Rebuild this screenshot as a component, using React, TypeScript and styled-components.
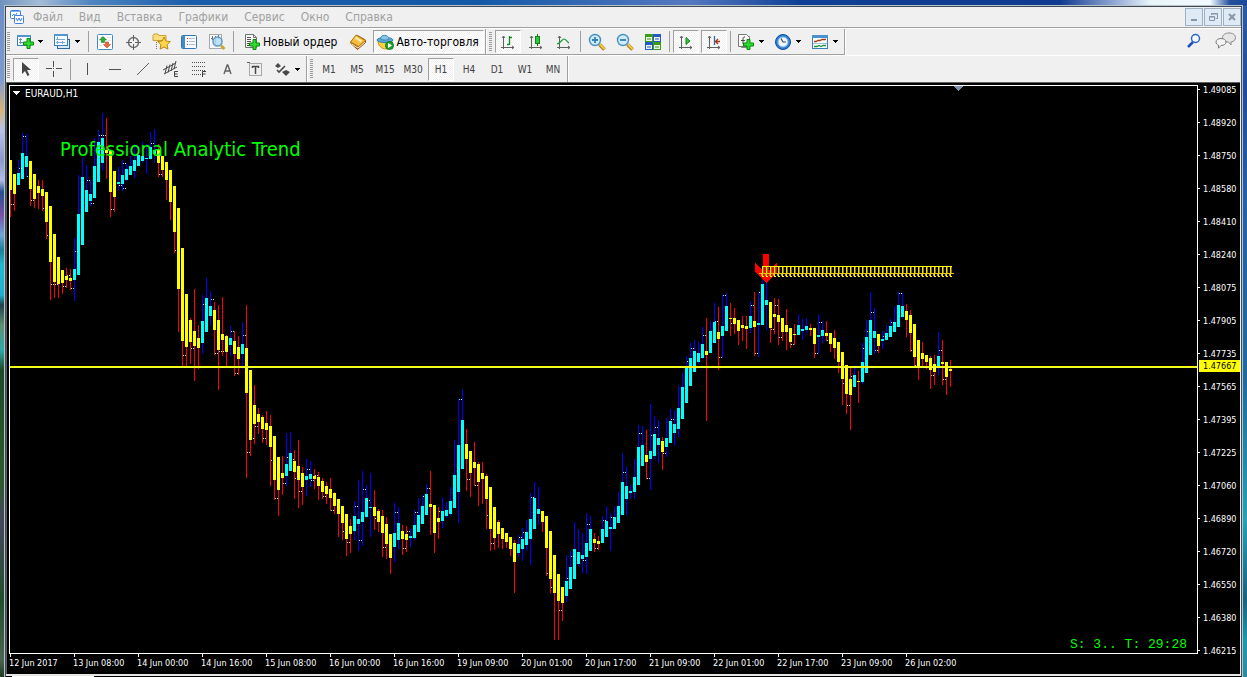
import React from 'react';
import styled, { createGlobalStyle, css } from 'styled-components';

const GlobalStyle = createGlobalStyle`
  * { box-sizing: border-box; }
  body { margin: 0; }
  button { font: inherit; color: inherit; margin: 0; }
`;

const Desktop = styled.div`
  min-height: 100vh;
  display: flex;
  padding: 5px 4px 0 4px;
  font-family: 'DejaVu Sans Condensed', 'DejaVu Sans', sans-serif;
  font-stretch: condensed;
  background:
    linear-gradient(90deg, #6f93bd 0, #a3bcd8 40px, #4f86c0 90px, #1a5dab 190px, #1459a8 480px, #5579c0 690px, #0f3f96 800px, #103a90 1060px, #9fb4dc 1120px, #e8f4fa 1150px, #f4fbff 1210px, #234f9d 1230px, #1d4a98 100%) top / 100% 6px no-repeat,
    linear-gradient(180deg, #2a5da8 0, #1d4c9c 90px, #2361a8 200px, #1c6aa0 380px, #27a0b8 520px, #15627f 600px, #1f97b0 640px, #2e8aa0 100%) right / 4px 100% no-repeat,
    linear-gradient(180deg, #6a8cc8 0, #7f9bd0 80px, #d9b27a 110px, #b8c4ea 130px, #8d99cc 160px, #b4bde4 180px, #24508c 192px, #7a4fa8 215px, #6fa6d8 235px, #1e7f96 250px, #22b8d0 265px, #22b0cc 295px, #20404c 305px, #5f9070 325px, #2fa8a8 350px, #1c4a28 370px, #2d5a2c 480px, #46465c 520px, #20502c 600px, #4a6450 660px, #203a24 100%) left / 4px 100% no-repeat,
    #16304c;
`;

const Frame = styled.div`
  flex: 1;
  min-width: 0;
  display: flex;
  flex-direction: column;
  border: 1px solid #b9c2c8;
  border-bottom: 0;
`;

const Inner = styled.div`
  flex: 1;
  display: flex;
  flex-direction: column;
  border: 1px solid #3c4a58;
  border-width: 1px 1px 0 1px;
  background: #f0f0f0;
`;

const MenuBar = styled.nav`
  display: flex;
  align-items: center;
  height: 21px;
  padding: 0 0 0 4px;
  border-bottom: 1px solid #a0a0a0;
  font-size: 12px;
  color: #a0a0a0;
`;

const MenuItem = styled.button`
  height: 20px;
  padding: 0 8px;
  border: 0;
  background: none;
  line-height: 20px;
`;

const AppIcon = styled.div`
  width: 15px;
  height: 16px;
`;

const WindowButtons = styled.div`
  display: flex;
  gap: 1px;
  margin-left: auto;
`;

const WindowButton = styled.button`
  width: 18px;
  height: 18px;
  padding: 0;
  display: grid;
  place-items: center;
  border: 1px solid #9fb0c2;
  background: #dfeaf7;
`;

const ToolRow = styled.div`
  display: flex;
  height: 27px;
  border-top: 1px solid #fff;
`;

const Strip = styled.div`
  display: flex;
  align-items: center;
  border-right: 1px solid #a0a0a0;
  border-bottom: 1px solid #a0a0a0;
  box-shadow: 1px 1px 0 #fff;

  & + & { padding-left: 2px; }
`;

const FlatStrip = styled(Strip)`
  border-bottom: 0;
  box-shadow: 1px 0 0 #fff;
`;

const Grip = styled.span`
  width: 3px;
  height: 20px;
  margin: 0 2px 0 1px;
  background: repeating-linear-gradient(180deg, #9a9a9a 0 1px, #f0f0f0 1px 2px);
`;

const Separator = styled.span`
  width: 1px;
  height: 21px;
  margin: 0 2px;
  background: #a0a0a0;
`;

const pressedLook = css`
  border-color: #a0a0a0 #fff #fff #a0a0a0;
  background: repeating-conic-gradient(#ffffff 0 25%, #f0f0f0 0 50%) 0 0 / 2px 2px;
`;

const ToolButton = styled.button<{ $pressed?: boolean; $wide?: boolean }>`
  display: flex;
  align-items: center;
  justify-content: ${p => (p.$wide ? 'flex-start' : 'center')};
  gap: 4px;
  width: ${p => (p.$wide ? 35 : 26)}px;
  height: 23px;
  margin: 0 1px;
  padding: ${p => (p.$wide ? '0 0 0 2px' : '0')};
  border: 1px solid transparent;
  background: none;
  font-size: 10px;
  color: #404040;
  white-space: nowrap;
  ${p => p.$pressed && pressedLook}
`;

const TextButton = styled(ToolButton)`
  width: auto;
  gap: 2px;
  padding: 0 5px;
  font-size: 12px;
  color: #000;
`;

const AutoButton = styled(TextButton)`
  padding: 0 4px 0 2px;
`;

const Picture = styled.svg`
  display: block;
  flex: none;
`;

const RightTools = styled.div`
  display: flex;
  gap: 4px;
  margin-left: auto;
  padding-right: 1px;
`;

const ChartWindow = styled.main`
  flex: 1;
  display: flex;
  margin: 0 1px 0 0;
  padding: 2px 0 0 2px;
  border-top: 1px solid #606060;
  border-left: 1px solid #606060;
  background: #000;
  color: #fff;
  font-size: 9px;
`;

const PlotColumn = styled.div`
  flex: 1;
  min-width: 0;
  display: flex;
  flex-direction: column;
`;

const Plot = styled.div`
  position: relative;
  flex: 1;
  border: 1px solid #fff;
`;

const PlotDrawing = styled.svg`
  position: absolute;
  inset: 0;
  width: 100%;
  height: 100%;
`;

const SymbolTitle = styled.div`
  position: absolute;
  top: 1px;
  left: 3px;
  display: flex;
  align-items: center;
  gap: 4px;
  height: 12px;
  font-size: 10px;
`;

const IndicatorName = styled.div`
  position: absolute;
  top: 51px;
  left: 50px;
  font-size: 20px;
  line-height: 24px;
  color: #00ff00;
  white-space: nowrap;
`;

const SpreadTimer = styled.div`
  position: absolute;
  right: 10px;
  bottom: 0;
  font-family: 'Liberation Mono', monospace;
  font-size: 13px;
  line-height: 16px;
  color: #00ff00;
  white-space: pre;
`;

const TimeAxis = styled.div`
  display: flex;
  height: 20px;
  overflow: hidden;
`;

const TimeLabel = styled.span`
  flex: none;
  width: 64px;
  line-height: 18px;
  white-space: nowrap;
  background: linear-gradient(#fff, #fff) 1px 0 / 1px 3px no-repeat;
`;

const PriceAxis = styled.div`
  position: relative;
  width: 42px;
`;

const PriceLabel = styled.div`
  height: 33px;
  padding-left: 5px;
  line-height: 10px;
  background: linear-gradient(#fff, #fff) 0 4px / 2px 1px no-repeat;

  &:nth-child(18) { height: 12px; }
`;

const CurrentPrice = styled.div`
  position: absolute;
  top: 275px;
  left: 1px;
  right: 0;
  padding-left: 4px;
  line-height: 12px;
  background: #ffff00;
  color: #000;
`;

const BottomEdge = styled.div`
  height: 3px;
  border-top: 2px solid #e6e6e2;
  background: linear-gradient(90deg, #000 6px, #fff 6px 88px, #000 88px);
`;

const Sym = ({ size = 18, children, label }: { size?: number; children: React.ReactNode; label?: string }) => (
  <Picture width={size} height={size} viewBox={`0 0 ${size} ${size}`} fill="none" aria-hidden={!label}>
    {children}
  </Picture>
);

const Arrow = () => (
  <Picture width="5" height="3" viewBox="0 0 5 3" shapeRendering="crispEdges">
    <path d="M0 0h5v1h-1v1h-1v1h-1v-1h-1v-1h-1z" fill="#000" />
  </Picture>
);

const Plus = ({ x, y }: { x: number; y: number }) => (
  <path transform={`translate(${x} ${y})`} d="M4 .5h3v3.500h3.500v3h-3.500v3.500h-3v-3.500h-3.500v-3h3.500z" fill="#2fdc2f" stroke="#068a0c" />
);

const NewChart = () => (
  <Sym>
    <rect x="1.500" y="2.500" width="13" height="10" fill="#f4faff" stroke="#3b7fb8" />
    <path d="M1 3h14" stroke="#4f97cc" strokeWidth="2" />
    <path d="M4.500 5v6M3 9.500h5M3 6.500h3" stroke="#7393ab" />
    <Plus x={7} y={5} />
  </Sym>
);
const Profiles = () => (
  <Sym>
    <rect x="4.500" y="6.500" width="12" height="9" fill="#d8e9f6" stroke="#2e6aa5" />
    <rect x="1.500" y="1.500" width="13" height="11" fill="#f4faff" stroke="#3b7fb8" />
    <path d="M1 2h14" stroke="#4f97cc" strokeWidth="2" />
    <path d="M4.500 4v3M3 6.500h9M4.500 8v3M3 9.500h9M9.500 8v3" stroke="#7ba6c6" />
  </Sym>
);
const MarketWatch = () => (
  <Sym>
    <rect x="1.500" y="1.500" width="15" height="15" rx="1" fill="#fff" stroke="#3f8ac4" />
    <path d="M4 4.500h2M11 4.500h4M12 7.500h3M3 12.500h3" stroke="#d9e2ea" />
    <path d="M7 3.500l3.500 3.500h-2v2.500h-3v-2.500h-2z" fill="#2da836" stroke="#158020" strokeWidth=".6" />
    <path d="M11 15l-3.500-3.500h2v-2.500h3v2.500h2z" fill="#ee6a3a" stroke="#c8401c" strokeWidth=".6" />
  </Sym>
);
const DataWindow = () => (
  <Sym>
    <circle cx="9.500" cy="9.500" r="5" stroke="#707070" strokeWidth="1.500" />
    <path d="M9.500 2v6M9.500 11v6M2 9.500h6M11 9.500h6" stroke="#606060" />
  </Sym>
);
const Navigator = () => (
  <Sym size={20}>
    <path d="M2 3.500l1-1.500h4l1 1.500h7v5h-13z" fill="#f9df7a" stroke="#caa036" />
    <path d="M5.500 10v8" stroke="#707070" strokeDasharray="1 1" />
    <path d="M13 5l1.900 4 4.300.6-3.100 3.100.8 4.400-3.900-2.100-3.900 2.100.8-4.400-3.100-3.100 4.300-.6z" fill="#ffd648" stroke="#b98414" />
  </Sym>
);
const Terminal = () => (
  <Sym>
    <rect x="1.500" y="2.500" width="15" height="13" rx="1" fill="#f7fbff" stroke="#2f78b6" />
    <path d="M2 3h3v12h-3z" fill="#3d8ccc" />
    <path d="M7.500 5v9" stroke="#3058a0" strokeDasharray="1 2" />
    <path d="M9 5.500h6M9 8.500h6M9 11.500h6" stroke="#b3c0cc" />
    <path d="M7 5.500h1M7 8.500h1M7 11.500h1" stroke="#de3a22" />
  </Sym>
);
const Tester = () => (
  <Sym>
    <rect x="1.500" y="1.500" width="12" height="14" fill="#f8f8f8" stroke="#a3a9ae" />
    <path d="M4.500 3v4M7.500 3v9M10.500 2v4M3 5.500h2M6 8.500h2" stroke="#707070" />
    <circle cx="9.500" cy="8.500" r="4.500" fill="#b5dcf4" fillOpacity=".85" stroke="#5a9bd0" strokeWidth="1.500" />
    <path d="M13 12.500l3.500 3.500" stroke="#d3a12a" strokeWidth="2.500" />
  </Sym>
);
const NewOrder = () => (
  <Sym>
    <path d="M2.500 1.500h8l3 3v10h-11z" fill="#fafafa" stroke="#707070" />
    <path d="M10.500 1.500v3h3" stroke="#707070" />
    <path d="M4 4.500h4M4 6.500h4M4 8.500h4M4 10.500h4M4 12.500h3" stroke="#555" />
    <Plus x={6} y={6} />
  </Sym>
);
const Book = () => (
  <Sym>
    <path d="M1.500 10l7 6.500 8-7v-2.500l-8-4.500z" fill="#a9640f" stroke="#8e520c" />
    <path d="M7 2l9.500 5.500-7 6-8-4.500z" fill="#f4bd3c" stroke="#b0771a" />
    <path d="M6.500 4.500l6 4" stroke="#ffe9a0" strokeWidth="2.500" />
    <path d="M2.500 11l6.500 4 7-6" stroke="#fff0c0" />
  </Sym>
);
const Robot = () => (
  <Sym>
    <path d="M2 8c0 4 3 8 8 8s6-3 6-8z" fill="#ffcf3e" stroke="#c99316" />
    <ellipse cx="9" cy="7" rx="8" ry="2.500" fill="#5ba9d6" stroke="#347eb0" />
    <path d="M4.500 6c0-5 8-5 8.500 0-2 1.500-6 1.500-8.500 0z" fill="#86c5e8" stroke="#3c88b6" />
    <circle cx="13.500" cy="12.500" r="4" fill="#1ea52c" stroke="#0c7d18" />
    <path d="M12 10l4 2.500-4 2.500z" fill="#fff" />
  </Sym>
);
const Axes = ({ children }: { children: React.ReactNode }) => (
  <Sym>
    <path d="M4.500 3v13M2 14.500h13M3 5l1.500-2 1.500 2M13 13l2 1.500-2 1.500" stroke="#606060" />
    {children}
  </Sym>
);
const BarsIcon = () => <Axes><path d="M10.500 3v9M8 11.500h2M11 4.500h2" stroke="#128a1c" strokeWidth="1.300" /></Axes>;
const CandlesIcon = () => <Axes><path d="M10.500 1v12" stroke="#0c7a16" /><rect x="8.500" y="3.500" width="4" height="7" fill="#2fc83a" stroke="#0c8a18" /></Axes>;
const LineIcon = () => <Axes><path d="M2 11c4-1 5-5 7-5s3 3 5 4" stroke="#23963a" strokeWidth="1.200" /></Axes>;
const Magnifier = ({ plus }: { plus?: boolean }) => (
  <Sym>
    <path d="M11.500 11.500l5 5" stroke="#a77a14" strokeWidth="3.500" />
    <path d="M12 11.500l4.500 4.500" stroke="#f0cb48" strokeWidth="2" />
    <circle cx="7" cy="7" r="5.500" fill="#cfeaf9" stroke="#4690c0" strokeWidth="1.400" />
    <path d={plus ? 'M4 7h6M7 4v6' : 'M4 7h6'} stroke="#3580b4" strokeWidth="1.800" />
  </Sym>
);
const Tiles = () => (
  <Sym>
    {[[1, 1, '#3d9c12'], [9, 1, '#2558c8'], [1, 9, '#2558c8'], [9, 9, '#3d9c12']].map(([x, y, c]) => (
      <g key={`${x}-${y}`} transform={`translate(${x} ${y})`}>
        <path d="M0 0h8v8h-8z" fill={c as string} />
        <path d="M1 3h6v4h-6z" fill="#eaf6ea" />
        <path d="M2 5h4" stroke={c as string} />
      </g>
    ))}
  </Sym>
);
const AutoScroll = () => <Axes><path d="M9 4.500l4 3.500-4 3.500z" fill="#35c83e" stroke="#0d8218" /></Axes>;
const ChartShift = () => <Axes><path d="M9.500 3v9" stroke="#2c6ca4" strokeWidth="1.300" /><path d="M15 8.500h-4M13 6l-2.500 2.500 2.500 2.500" stroke="#b03a10" strokeWidth="1.400" /></Axes>;
const Indicators = () => (
  <Sym>
    <path d="M4.500 3.500h8v11h-8z" fill="#e6e6e6" stroke="#888" />
    <path d="M1.500 1.500h8l3 3v9h-11z" fill="#fafafa" stroke="#777" />
    <path d="M8 4c-2-.500-2 1-2 3v4M4 7.500h4" stroke="#404040" />
    <Plus x={6} y={6} />
  </Sym>
);
const Clock = () => (
  <Sym>
    <circle cx="9" cy="9" r="7.500" fill="#2c7fd4" stroke="#124f9c" />
    <circle cx="9" cy="9" r="5" fill="#f2f7fb" stroke="#8ebbe6" />
    <path d="M7 5.500l2 3.500h3" stroke="#404a58" strokeWidth="1.200" />
  </Sym>
);
const Template = () => (
  <Sym>
    <rect x="1.500" y="2.500" width="15" height="13" fill="#fafdff" stroke="#3b7fb8" />
    <path d="M1 3.500h16" stroke="#4a92d0" strokeWidth="3" />
    <path d="M3 8.500h2l2-1h2l2-1h3l1-.500" stroke="#a43a12" strokeWidth="1.300" />
    <path d="M2 10.500h14" stroke="#9cc2de" />
    <path d="M3 13.500h3l2-1 2 1 2-1h3" stroke="#22923a" strokeWidth="1.300" />
  </Sym>
);

const Cursor = () => <Sym><path d="M5 2v12l3-3 2.500 5 2-1-2.500-5h4z" fill="#454545" /></Sym>;
const Cross = () => <Sym><path d="M8.500 1v6M8.500 11v6M1 8.500h6M11 8.500h6M8 8.500h1" stroke="#505050" /></Sym>;
const VLine = () => <Sym><path d="M9.500 3v12" stroke="#505050" /></Sym>;
const HLine = () => <Sym><path d="M3 9.500h12" stroke="#505050" /></Sym>;
const TLine = () => <Sym><path d="M3 15l12-12" stroke="#606060" /></Sym>;
const Channel = () => (
  <Sym>
    <path d="M1 10l13-7M2 14l13-7M5 5.500l-2 8M8 4.500l-2 8M11 3l-2 8M14 1l-2 8" stroke="#484848" />
    <path d="M16 11.500h-3.500v5h3.500M12.500 14h3" stroke="#404040" />
  </Sym>
);
const Fibo = () => (
  <Sym>
    <path d="M2 2.500h14M2 6.500h14M2 10.500h14M2 14.500h9" stroke="#505050" strokeDasharray="1 1" />
    <path d="M12.500 17v-5.500h3.500M12.500 14h3" stroke="#404040" />
  </Sym>
);
const LetterA = () => <Sym><path d="M6 14l3.200-9h.6l3.200 9M7 11h5" stroke="#606060" strokeWidth="1.400" /></Sym>;
const LabelT = () => (
  <Sym>
    <rect x="3.500" y="3.500" width="12" height="12" stroke="#606060" strokeDasharray="1 1" />
    <path d="M1 2.500h3" stroke="#606060" />
    <path d="M6 6.500h7M9.500 6v8M6.500 6v2M12.500 6v2" stroke="#484848" strokeWidth="1.500" />
  </Sym>
);
const Shapes = () => (
  <Sym>
    <path d="M2 6l3-3 3 3-3 2zM9 12l4 4 4-4-4-2z" fill="#484848" />
    <path d="M4 10l2 2 6-6" stroke="#484848" strokeWidth="1.600" />
  </Sym>
);

/* Candle rows: direction (1 up, 0 down), high, body top, body bottom, low in pane pixels. */
const CANDLES: number[][] = [
  [0,160,160,190,217],[0,174,174,194,211],[1,160,173,185,185],[1,133,153,179,179],[1,134,156,167,177],[0,161,161,189,206],[0,174,174,199,208],[0,180,186,193,209],[0,180,189,196,211],[0,192,192,222,239],
  [0,206,206,262,300],[0,234,234,282,298],[0,257,257,284,298],[0,270,270,283,294],[0,268,276,280,288],[0,269,278,281,290],[1,238,269,280,301],[1,175,214,275,275],[1,158,177,245,245],[1,165,190,212,212],
  [1,180,194,201,206],[1,138,166,198,199],[1,130,142,182,182],[1,113,138,163,170],[0,118,150,153,179],[0,151,151,192,217],[0,171,171,197,212],[1,167,182,184,190],[1,160,175,184,191],[1,163,169,180,181],
  [1,156,166,175,175],[1,144,160,171,178],[1,146,155,166,166],[1,142,156,161,163],[1,144,158,159,174],[1,132,147,159,159],[1,129,150,154,163],[0,144,150,163,177],[0,156,156,170,177],[0,162,162,180,200],
  [0,170,170,202,220],[0,186,186,232,253],[0,208,208,289,332],[0,248,248,341,366],[0,294,294,347,366],[0,318,320,342,364],[0,289,331,346,381],[0,325,338,348,369],[1,295,321,343,354],[1,278,298,332,332],
  [1,291,306,316,326],[0,302,310,330,355],[0,305,320,350,390],[0,297,334,340,356],[0,335,336,352,366],[1,326,338,345,356],[0,331,341,354,376],[0,336,347,359,375],[1,322,344,354,369],[0,305,348,393,478],
  [0,370,370,440,456],[0,385,405,424,444],[0,408,414,422,434],[0,415,417,429,443],[0,411,423,430,445],[0,415,426,447,486],[0,436,436,480,500],[0,457,457,490,516],[0,456,473,478,495],[1,433,464,476,486],
  [1,432,453,471,471],[0,450,461,472,499],[0,440,466,480,508],[0,467,473,487,505],[1,459,476,480,496],[1,461,474,479,487],[0,469,476,479,489],[0,472,477,486,500],[0,478,481,492,499],[0,482,486,494,504],
  [0,478,489,498,511],[0,492,493,506,514],[0,499,499,514,537],[0,506,506,523,540],[0,514,514,539,556],[0,519,526,534,553],[1,501,516,531,540],[1,480,519,524,551],[1,471,512,522,546],[1,485,498,517,518],
  [1,473,507,508,537],[0,490,507,516,530],[0,509,511,522,532],[0,510,516,533,557],[0,517,524,544,559],[0,534,534,558,574],[1,503,533,547,562],[1,507,523,540,549],[0,525,531,539,555],[0,526,534,540,552],
  [1,529,536,538,547],[1,510,525,538,540],[1,498,515,532,532],[1,495,506,524,524],[1,484,494,515,515],[0,471,504,507,535],[0,505,505,533,553],[0,507,518,522,539],[1,497,511,521,528],[1,502,510,516,518],
  [1,487,501,514,516],[1,440,475,508,508],[1,399,445,492,523],[1,389,420,469,469],[0,429,444,459,491],[0,451,451,473,497],[0,442,462,468,486],[0,462,464,482,506],[0,462,473,479,504],[0,474,476,499,529],
  [0,487,487,529,551],[0,507,507,538,550],[0,520,522,534,548],[0,528,528,539,549],[0,533,533,542,548],[0,537,537,549,556],[0,540,543,562,593],[1,535,544,553,557],[1,528,539,549,561],[1,520,532,545,551],
  [1,493,519,539,565],[1,482,498,529,529],[1,487,509,514,525],[0,511,511,522,532],[0,516,516,548,576],[0,531,531,579,593],[0,555,555,593,640],[0,574,574,601,640],[0,587,587,603,621],[1,555,581,596,602],
  [1,551,567,589,589],[1,522,549,579,579],[1,529,552,564,566],[1,533,555,559,573],[1,513,543,557,574],[1,516,529,551,551],[0,533,539,543,552],[0,536,541,544,550],[1,516,529,543,543],[1,506,521,537,537],
  [1,513,527,529,551],[1,506,517,529,529],[1,492,506,523,523],[1,453,482,515,515],[1,466,486,499,515],[1,485,491,493,499],[1,459,477,492,499],[1,425,447,485,485],[1,426,445,466,466],[0,430,455,462,479],
  [1,404,451,459,490],[1,416,434,456,459],[1,420,438,445,463],[0,437,441,452,470],[1,418,438,447,457],[1,409,421,443,443],[1,410,424,433,446],[1,385,408,429,437],[1,373,387,419,419],[1,356,367,403,403],
  [1,343,358,386,386],[1,340,351,372,372],[1,342,353,362,364],[1,327,344,358,359],[0,318,351,355,421],[1,321,331,353,353],[1,303,322,343,343],[0,307,332,339,370],[1,295,326,336,358],[1,293,306,331,331],
  [0,303,318,319,336],[0,308,318,324,334],[0,320,320,331,345],[0,316,325,328,341],[0,316,326,329,349],[1,302,316,328,333],[0,292,321,327,356],[1,292,323,325,357],[1,280,284,325,325],[1,282,300,305,330],
  [0,302,302,328,343],[0,298,314,317,334],[0,299,315,322,345],[0,318,318,332,341],[0,309,325,332,350],[0,328,328,342,348],[0,324,334,335,345],[1,314,325,335,335],[1,319,329,331,340],[1,318,326,330,333],
  [0,324,328,330,336],[0,328,328,344,358],[1,314,335,337,354],[1,321,330,336,343],[0,321,333,336,341],[0,333,333,344,352],[0,330,338,348,359],[0,342,342,362,373],[0,352,352,379,405],[0,365,365,394,414],
  [0,368,379,395,430],[1,365,375,387,387],[0,371,381,382,403],[1,343,362,382,384],[1,320,337,373,373],[1,292,320,355,355],[1,308,331,338,354],[0,334,334,346,353],[1,331,339,341,349],[1,325,333,340,340],
  [1,319,326,337,337],[1,306,322,332,332],[1,292,305,327,327],[1,293,306,317,319],[0,304,311,320,337],[0,310,315,333,352],[0,324,324,357,367],[0,340,340,366,380],[0,342,353,359,366],[0,355,355,362,369],
  [0,356,358,370,389],[0,355,364,372,385],[1,332,356,366,375],[0,340,362,364,385],[0,362,362,377,395],[0,360,369,371,387],
];

/* Close/open ticks between neighbouring candles: candle index, y. */
const TICKS: number[][] = [
  [0,204],[2,168],[3,136],[4,176],[5,200],[7,189],[8,208],[9,235],[10,284],[11,284],[13,286],[14,275],[15,288],[16,251],[19,180],[20,203],[22,135],[23,135],[25,209],[27,185],[28,188],[28,163],[35,143],[37,174],[41,250],[43,355],[45,348],[48,304],[50,299],[51,353],[52,351],[53,351],[55,331],[56,373],[58,335],
  [59,452],[60,438],[61,426],[63,438],[65,460],[66,498],[68,483],[69,457],[70,459],[71,478],[72,491],[74,469],[75,480],[76,475],[78,496],[80,510],[83,531],[84,542],[86,506],[87,540],[88,489],[89,500],[91,518],[93,547],[96,512],[98,548],[99,531],[101,512],[103,496],
  [104,488],[107,511],[112,399],[114,479],[116,485],[119,515],[120,543],[127,537],[128,532],[130,497],[134,573],[135,587],[137,610],[139,578],[140,556],[143,560],[144,524],[146,548],[148,520],[150,517],[153,472],[157,433],[159,478],
  [160,435],[161,427],[163,453],[165,419],[169,361],[170,348],[173,335],[176,321],[177,357],[178,295],[180,323],[185,305],[186,353],[187,292],[190,329],[191,305],[192,337],[195,344],[201,353],[202,322],[204,340],[208,383],[209,405],[210,376],[213,348],[214,331],[215,312],[216,350],[218,336],[220,322],[222,293],[225,350],[226,365],[230,375],[232,350],[233,379],
];

const PRICES = ['1.49085','1.48920','1.48750','1.48580','1.48410','1.48240','1.48075','1.47905','1.47735','1.47565','1.47395','1.47225','1.47060','1.46890','1.46720','1.46550','1.46380','1.46215'];
const TIMES = ['12 Jun 2017','13 Jun 08:00','14 Jun 00:00','14 Jun 16:00','15 Jun 08:00','16 Jun 00:00','16 Jun 16:00','19 Jun 09:00','20 Jun 01:00','20 Jun 17:00','21 Jun 09:00','22 Jun 01:00','22 Jun 17:00','23 Jun 09:00','26 Jun 02:00'];
const MENU = ['Файл', 'Вид', 'Вставка', 'Графики', 'Сервис', 'Окно', 'Справка'];
const PERIODS = ['M1', 'M5', 'M15', 'M30', 'H1', 'H4', 'D1', 'W1', 'MN'];

const Candles = () => (
  <PlotDrawing shapeRendering="crispEdges" aria-label="EURAUD H1">
    <g transform="translate(-10 -86)">
      {CANDLES.map(([up, high, top, bottom, low], i) => {
        const x = 10 + i * 4;
        return (
          <g key={i}>
            <rect x={x} y={high} width="1" height={low - high} fill={up ? '#0000ff' : '#ff0000'} />
            <rect x={x - 1} y={top} width="3" height={bottom - top} fill={up ? '#00ffff' : '#ffff00'} />
          </g>
        );
      })}
      {TICKS.map(([i, y]) => (
        <g key={`${i}-${y}`}>
          <rect x={11 + i * 4} y={y} width="1" height="1" fill={i % 2 ? '#ffff66' : '#40ffff'} />
          <rect x={13 + i * 4} y={y} width="1" height="1" fill={i % 2 ? '#40ffff' : '#ffff66'} />
        </g>
      ))}
      <path d="M763 254h6v16l8-7v9l-10 11h-1l-11-11v-9l8 7z" fill="#ff0000" />
      {Array.from({ length: 48 }, (_, i) => (
        <g key={i}>
          <rect x={762 + i * 4} y="267" width="1" height="9" fill="#d8f000" />
          <rect x={763 + i * 4} y="267" width="1" height="7" fill="#a06a10" />
          <rect x={761 + i * 4} y="274" width="1" height="2" fill="#e0a010" />
          <rect x={762 + i * 4} y="276" width="2" height="1" fill="#ffff00" />
        </g>
      ))}
      <path d="M762 266.500h190" stroke="#ffff00" />
      <path d="M759 273.500h195" stroke="#e8c800" />
    </g>
    <g transform="translate(0 280)">
      <rect width="100%" height="1" fill="#ffff00" />
      <rect y="1" width="100%" height="1" fill="#e8ff30" />
    </g>
    <path d="M944 0h9v1h-1v1h-1v1h-1v1h-1v1h-1v-1h-1v-1h-1v-1h-1v-1h-1z" fill="#8091a8" />
  </PlotDrawing>
);

export default function App() {
  return (
    <Desktop>
      <GlobalStyle />
      <Frame>
        <Inner>
          <MenuBar>
            <AppIcon>
              <Sym size={16}>
                <rect x=".5" y="1.500" width="10" height="8" rx="1" fill="#fff" stroke="#3f7fe0" />
                <path d="M1 2.500h9" stroke="#7eaef2" />
                <path d="M2 7l2-2 1 2 2-3" stroke="#3f7fe0" />
                <rect x="4.500" y="6.500" width="9" height="8" rx="1" fill="#fff" stroke="#3f7fe0" />
                <path d="M6 9l1.500 3 1.500-3 1.500 3 1.500-3" stroke="#3f7fe0" />
              </Sym>
            </AppIcon>
            {MENU.map(m => <MenuItem key={m}>{m}</MenuItem>)}
            <WindowButtons>
              <WindowButton aria-label="Свернуть"><Sym size={12}><path d="M3 9h6" stroke="#8796a6" strokeWidth="2" /></Sym></WindowButton>
              <WindowButton aria-label="Восстановить"><Sym size={12}><path d="M4.500 4v-1.500h6v5h-2M4 3h7" stroke="#8796a6" /><path d="M2.500 5.500h5v4h-5zM2 6h6" stroke="#8796a6" /></Sym></WindowButton>
              <WindowButton aria-label="Закрыть"><Sym size={12}><path d="M3 3l6 6M9 3l-6 6" stroke="#8796a6" strokeWidth="2" /></Sym></WindowButton>
            </WindowButtons>
          </MenuBar>

          <ToolRow>
            <Strip>
              <Grip />
              <ToolButton $wide aria-label="Новый график"><NewChart /><Arrow /></ToolButton>
              <ToolButton $wide aria-label="Профили"><Profiles /><Arrow /></ToolButton>
              <Separator />
              <ToolButton aria-label="Обзор рынка"><MarketWatch /></ToolButton>
              <ToolButton aria-label="Окно данных"><DataWindow /></ToolButton>
              <ToolButton aria-label="Навигатор"><Navigator /></ToolButton>
              <ToolButton aria-label="Терминал"><Terminal /></ToolButton>
              <ToolButton aria-label="Тестер"><Tester /></ToolButton>
              <Separator />
              <TextButton><NewOrder />Новый ордер</TextButton>
              <ToolButton aria-label="MetaEditor"><Book /></ToolButton>
              <AutoButton $pressed><Robot />Авто-торговля</AutoButton>
            </Strip>
            <Strip>
              <Grip />
              <ToolButton $pressed aria-label="Бары"><BarsIcon /></ToolButton>
              <ToolButton aria-label="Свечи"><CandlesIcon /></ToolButton>
              <ToolButton aria-label="Линия"><LineIcon /></ToolButton>
              <Separator />
              <ToolButton aria-label="Увеличить"><Magnifier plus /></ToolButton>
              <ToolButton aria-label="Уменьшить"><Magnifier /></ToolButton>
              <ToolButton aria-label="Окна мозаикой"><Tiles /></ToolButton>
              <Separator />
              <ToolButton $pressed aria-label="Автопрокрутка"><AutoScroll /></ToolButton>
              <ToolButton $pressed aria-label="Сдвиг графика"><ChartShift /></ToolButton>
              <Separator />
              <ToolButton $wide aria-label="Индикаторы"><Indicators /><Arrow /></ToolButton>
              <ToolButton $wide aria-label="Периоды"><Clock /><Arrow /></ToolButton>
              <ToolButton $wide aria-label="Шаблоны"><Template /><Arrow /></ToolButton>
            </Strip>
            <RightTools>
              <ToolButton aria-label="Поиск">
                <Sym><path d="M3 15l5-5" stroke="#1f4fc0" strokeWidth="2.500" /><circle cx="10.500" cy="6.500" r="4" fill="#f4f8ff" stroke="#2c62d4" strokeWidth="1.500" /></Sym>
              </ToolButton>
              <ToolButton aria-label="Чат">
                <Sym size={22}>
                  <path d="M14 3c-4 0-6.500 2-6.500 4.500s2 4.500 6 4.500l2.500 3v-3c3-.5 4.500-2 4.500-4.500s-2.500-4.500-6.500-4.500z" fill="#e6e6e6" stroke="#8a8a8a" />
                  <path d="M6 8.500c-3 0-5 1.500-5 3.500 0 1.500 1 2.800 2.500 3.200v3l2.500-2.700c3 0 5-1.500 5-3.500s-2-3.500-5-3.500z" fill="#f4f4f4" stroke="#7a7a7a" />
                </Sym>
              </ToolButton>
            </RightTools>
          </ToolRow>

          <ToolRow>
            <FlatStrip>
              <Grip />
              <ToolButton $pressed aria-label="Курсор"><Cursor /></ToolButton>
              <ToolButton aria-label="Перекрестие"><Cross /></ToolButton>
              <Separator />
              <ToolButton aria-label="Вертикальная линия"><VLine /></ToolButton>
              <ToolButton aria-label="Горизонтальная линия"><HLine /></ToolButton>
              <ToolButton aria-label="Трендовая линия"><TLine /></ToolButton>
              <ToolButton aria-label="Канал"><Channel /></ToolButton>
              <ToolButton aria-label="Фибоначчи"><Fibo /></ToolButton>
              <ToolButton aria-label="Текст"><LetterA /></ToolButton>
              <ToolButton aria-label="Метка"><LabelT /></ToolButton>
              <ToolButton $wide aria-label="Стрелки"><Shapes /><Arrow /></ToolButton>
            </FlatStrip>
            <FlatStrip>
              <Grip />
              {PERIODS.map(p => <ToolButton key={p} $pressed={p === 'H1'}>{p}</ToolButton>)}
            </FlatStrip>
          </ToolRow>

          <ChartWindow>
            <PlotColumn>
              <Plot>
                <Candles />
                <SymbolTitle>
                  <Picture width="8" height="4" viewBox="0 0 8 4" shapeRendering="crispEdges"><path d="M0 0h7v1h-1v1h-1v1h-1v1h-1v-1h-1v-1h-1v-1h-1z" fill="#fff" /></Picture>
                  EURAUD,H1
                </SymbolTitle>
                <IndicatorName>Professional Analytic Trend</IndicatorName>
                <SpreadTimer>S: 3.. T: 29:28</SpreadTimer>
              </Plot>
              <TimeAxis>{TIMES.map(t => <TimeLabel key={t}>{t}</TimeLabel>)}</TimeAxis>
            </PlotColumn>
            <PriceAxis>
              {PRICES.map(p => <PriceLabel key={p}>{p}</PriceLabel>)}
              <CurrentPrice>1.47667</CurrentPrice>
            </PriceAxis>
          </ChartWindow>
          <BottomEdge />
        </Inner>
      </Frame>
    </Desktop>
  );
}
